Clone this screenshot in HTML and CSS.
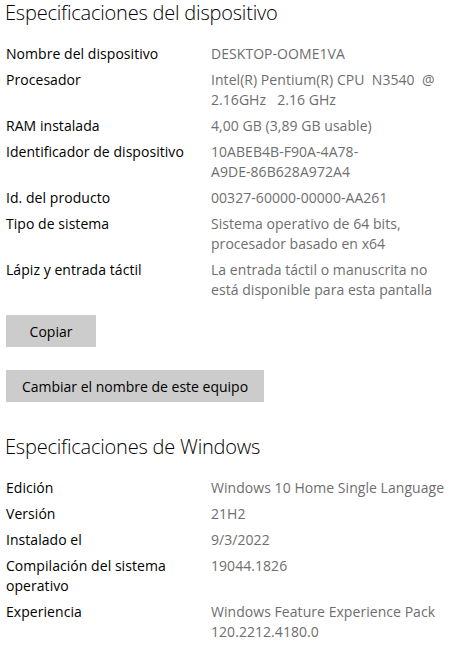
FILE: index.html
```html
<!DOCTYPE html>
<html lang="es">
<head>
<meta charset="utf-8">
<link rel="stylesheet" href="styles.css">
</head>
<body>
<main class="page">
  <h1 class="title">Especificaciones del dispositivo</h1>
  <dl class="specs">
    <dt>Nombre del dispositivo</dt><dd>DESKTOP-OOME1VA</dd>
    <dt>Procesador</dt><dd>Intel(R) Pentium(R) CPU&nbsp; N3540&nbsp; @<br>2.16GHz&nbsp;&nbsp; 2.16 GHz</dd>
    <dt>RAM instalada</dt><dd>4,00 GB (3,89 GB usable)</dd>
    <dt>Identificador de dispositivo</dt><dd>10ABEB4B-F90A-4A78-<br>A9DE-86B628A972A4</dd>
    <dt>Id. del producto</dt><dd>00327-60000-00000-AA261</dd>
    <dt>Tipo de sistema</dt><dd>Sistema operativo de 64 bits,<br>procesador basado en x64</dd>
    <dt>Lápiz y entrada táctil</dt><dd>La entrada táctil o manuscrita no<br>está disponible para esta pantalla</dd>
  </dl>
  <button class="btn btn-copy">Copiar</button>
  <button class="btn btn-rename">Cambiar el nombre de este equipo</button>
  <h2 class="title title-win">Especificaciones de Windows</h2>
  <dl class="specs">
    <dt>Edición</dt><dd>Windows 10 Home Single Language</dd>
    <dt>Versión</dt><dd>21H2</dd>
    <dt>Instalado el</dt><dd>9/3/2022</dd>
    <dt>Compilación del sistema<br>operativo</dt><dd>19044.1826</dd>
    <dt>Experiencia</dt><dd>Windows Feature Experience Pack<br>120.2212.4180.0</dd>
  </dl>
</main>
</body>
</html>
```

FILE: styles.css
```css
html, body {
  margin: 0;
  padding: 0;
  background: #ffffff;
}

.page {
  display: flex;
  flex-direction: column;
  align-items: flex-start;
  padding: 0 0 0 6px;
  font-family: "Open Sans", "Noto Sans", sans-serif;
  font-size: 14px;
  color: #000000;
}

.title {
  margin: 0;
  font-size: 20px;
  font-weight: 300;
  line-height: 26px;
  letter-spacing: -0.2px;
  margin-left: -1px;
  color: #000;
}

.title-win {
  margin-top: 32px;
}

.specs {
  display: grid;
  grid-template-columns: 205px auto;
  row-gap: 6px;
  margin: 18px 0 0 0;
  line-height: 20px;
  letter-spacing: 0.05px;
}

.specs dt {
  margin: 0;
  color: #000;
}

.specs dd {
  margin: 0;
  color: #6e6e6e;
  white-space: nowrap;
}

.btn {
  border: none;
  background: #cccccc;
  font-family: inherit;
  font-size: 14px;
  color: #000;
  height: 32px;
  padding: 0;
  margin: 0;
}

.btn-copy {
  width: 90px;
  margin-top: 15px;
}

.btn-rename {
  width: 258px;
  margin-top: 23px;
}
```
